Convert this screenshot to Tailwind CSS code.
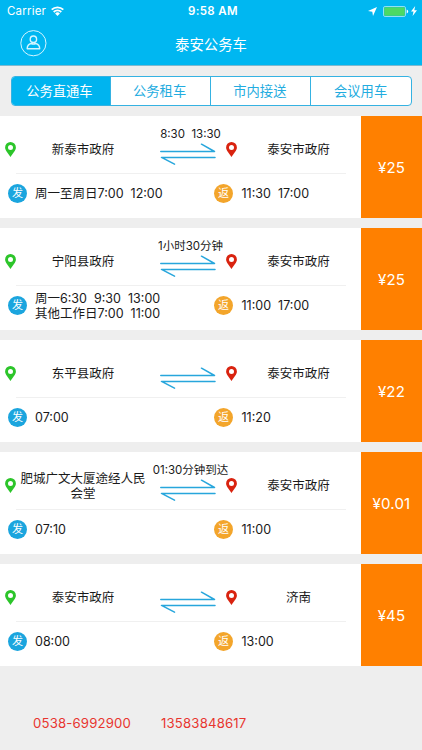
<!doctype html>
<html lang="zh-CN">
<head>
  <meta charset="UTF-8">
  <meta name="viewport" content="width=device-width, initial-scale=1.0">
  <title>泰安公务车</title>
  <script src="https://cdn.jsdelivr.net/npm/@tailwindcss/browser@4"></script>
</head>
<body class="w-[422px] h-[750px] overflow-hidden bg-[#eeeeee] font-['Inter','Noto_Sans_CJK_SC',sans-serif] text-[#1a1a1a]">
  <header class="h-[66px] bg-[#00b7f1] border-b border-[#7fb9cf] text-white">
    <!-- status bar -->
    <div class="h-[22px] grid grid-cols-3 items-center pl-[7px] pr-[5px] text-[11px] leading-none">
      <div class="flex items-center gap-[5px] pt-px">
        <span class="text-[11.5px] tracking-[0.2px]">Carrier</span>
        <svg class="w-[13px] h-[10px] -mt-px" viewBox="0 0 13 10" fill="none" stroke="currentColor" stroke-width="1.8">
          <path d="M0.7 3.7a8.2 8.2 0 0 1 11.6 0M2.7 6a5.4 5.4 0 0 1 7.6 0"/>
          <path d="M6.5 9.9L4.1 7.5a3.4 3.4 0 0 1 4.8 0z" fill="currentColor" stroke="none"/>
        </svg>
      </div>
      <span class="text-center font-semibold text-[11.5px] tracking-[0.35px] pt-px pl-[2px]">9:58 AM</span>
      <div class="flex items-center justify-end">
        <svg class="w-[9px] h-[9px] mr-[6px]" viewBox="0 0 9 9" fill="currentColor"><path d="M9 0L5 9L4.3 4.8L0 4z"/></svg>
        <svg class="w-[26px] h-[11px]" viewBox="0 0 26 11">
          <rect x="0.5" y="0.5" width="22" height="10" rx="1.6" fill="none" stroke="#b9ecf5" stroke-width="0.8"/>
          <rect x="1.2" y="1.2" width="20.6" height="8.6" rx="0.8" fill="#4cd964"/>
          <path d="M23.7 3.5a2.1 2.1 0 0 1 0 4z" fill="#fff"/>
        </svg>
        <svg class="w-[6px] h-[10px] ml-[2px]" viewBox="0 0 6 9" preserveAspectRatio="none" fill="currentColor"><path d="M4.2 0L0 5h2.5L1.6 9L6 3.8H3.3z"/></svg>
      </div>
    </div>
    <!-- nav bar -->
    <div class="h-[43px] grid grid-cols-[1fr_auto_1fr] items-center pl-[20px] pr-5">
      <svg class="w-[27px] h-[27px] -mt-px" viewBox="0 0 27 27" fill="none" stroke="#d6f5ff">
        <circle cx="13.4" cy="13.2" r="12.6" stroke-width="1"/>
        <circle cx="13.4" cy="9.2" r="3.2" stroke-width="1.4"/>
        <path d="M7.2 18.8c0-3.2 2-4.9 4.1-5.3q2.1 1 4.2 0c2.2.4 4.2 2.1 4.2 5.3z" stroke-width="1.4" stroke-linejoin="round"/>
      </svg>
      <h1 class="text-[14.4px] leading-none pt-[3px]">泰安公务车</h1>
    </div>
  </header>

  <nav class="mx-[10.5px] mt-[10px] h-[30px] grid grid-cols-4 rounded-[4px] border border-[#35b2e2] overflow-hidden bg-white text-[13.3px] text-[#23ace0] text-center leading-[28px] divide-x divide-[#35b2e2]">
    <div class="bg-[#00b4ef] text-white pr-[3px]">公务直通车</div>
    <div class="pr-[2px]">公务租车</div>
    <div class="pr-px">市内接送</div>
    <div>会议用车</div>
  </nav>

  <main id="routes" class="mt-[10px] flex flex-col gap-[10px]"></main>

  <footer class="flex gap-[30px] pl-[33px] mt-[49px] text-[13.2px] tracking-[0.16px] leading-[16px] text-[#e8352e]">
    <span>0538-6992900</span>
    <span>13583848617</span>
  </footer>

  <script>
    const routes = [
      { from: '新泰市政府', to: '泰安市政府', note: '8:30  13:30', go: '周一至周日7:00  12:00', back: '11:30  17:00', price: '25' },
      { from: '宁阳县政府', to: '泰安市政府', note: '1小时30分钟', go: '周一6:30  9:30  13:00\n其他工作日7:00  11:00', back: '11:00  17:00', price: '25' },
      { from: '东平县政府', to: '泰安市政府', note: '', go: '07:00', back: '11:20', price: '22' },
      { from: '肥城广文大厦途经人民会堂', to: '泰安市政府', note: '01:30分钟到达', go: '07:10', back: '11:00', price: '0.01' },
      { from: '泰安市政府', to: '济南', note: '', go: '08:00', back: '13:00', price: '45' },
    ];

    const pin = '<path fill-rule="evenodd" d="M5.5 0A5.4 5.4 0 0 0 .1 5.4C.1 8.7 3.4 11.2 5.5 15C7.6 11.2 10.9 8.7 10.9 5.4A5.4 5.4 0 0 0 5.5 0zM5.5 2.9a2.5 2.5 0 1 1 0 5a2.5 2.5 0 0 1 0-5z"/>';

    document.getElementById('routes').innerHTML = routes.map(r => `
      <section class="flex h-[102px] bg-white">
        <div class="w-[361px] text-[12.5px] leading-[14.5px]">
          <div class="flex items-center h-[57px] pl-[5px] pt-[10px]">
            <svg class="w-[11px] h-[15px] shrink-0 text-[#2cc52a]" viewBox="0 0 11 15" fill="currentColor">${pin}</svg>
            <div class="w-[128px] ml-[3px] pt-[2px] shrink-0 text-center">${r.from}</div>
            <div class="w-[62px] ml-[12px] h-[47px] shrink-0 flex flex-col items-center -mt-[10px]">
              <div class="h-[15px] mt-[6px] ml-px shrink-0 whitespace-pre text-[11.5px] leading-[15px]">${r.note}</div>
              <svg class="w-[56px] h-[22px] mt-px mr-[4px] shrink-0" viewBox="0 0 56 22" fill="none" stroke="#27a6dc" stroke-width="1.5" stroke-linecap="round" stroke-linejoin="round">
                <path d="M0.8 8.5H54.5L41.5 1.2M55 14.4H1.5L14.5 21.2"/>
              </svg>
            </div>
            <svg class="w-[11px] h-[15px] ml-[5px] shrink-0 text-[#d9230f]" viewBox="0 0 11 15" fill="currentColor">${pin}</svg>
            <div class="w-[123px] pt-[2px] shrink-0 text-center">${r.to}</div>
          </div>
          <div class="ml-[16px] mr-[15px] h-px bg-[#f0f0f0]"></div>
          <div class="flex items-center h-[41px] -mt-px pl-[8px] text-[12.5px] whitespace-pre">
            <div class="size-[19px] rounded-full bg-[#1ba5de] text-white text-[11px] leading-[19px] text-center">发</div>
            <div class="w-[171px] ml-[8px] pt-[2px]">${r.go}</div>
            <div class="size-[19px] ml-[8px] rounded-full bg-[#f3a52b] text-white text-[11px] leading-[19px] text-center">返</div>
            <div class="ml-[8.5px] pt-[2px]">${r.back}</div>
          </div>
        </div>
        <div class="flex-1 flex items-center justify-center pt-[2px] bg-[#ff8000] text-white text-[15px] tracking-[0.2px]">¥${r.price}</div>
      </section>`).join('');
  </script>
</body>
</html>
